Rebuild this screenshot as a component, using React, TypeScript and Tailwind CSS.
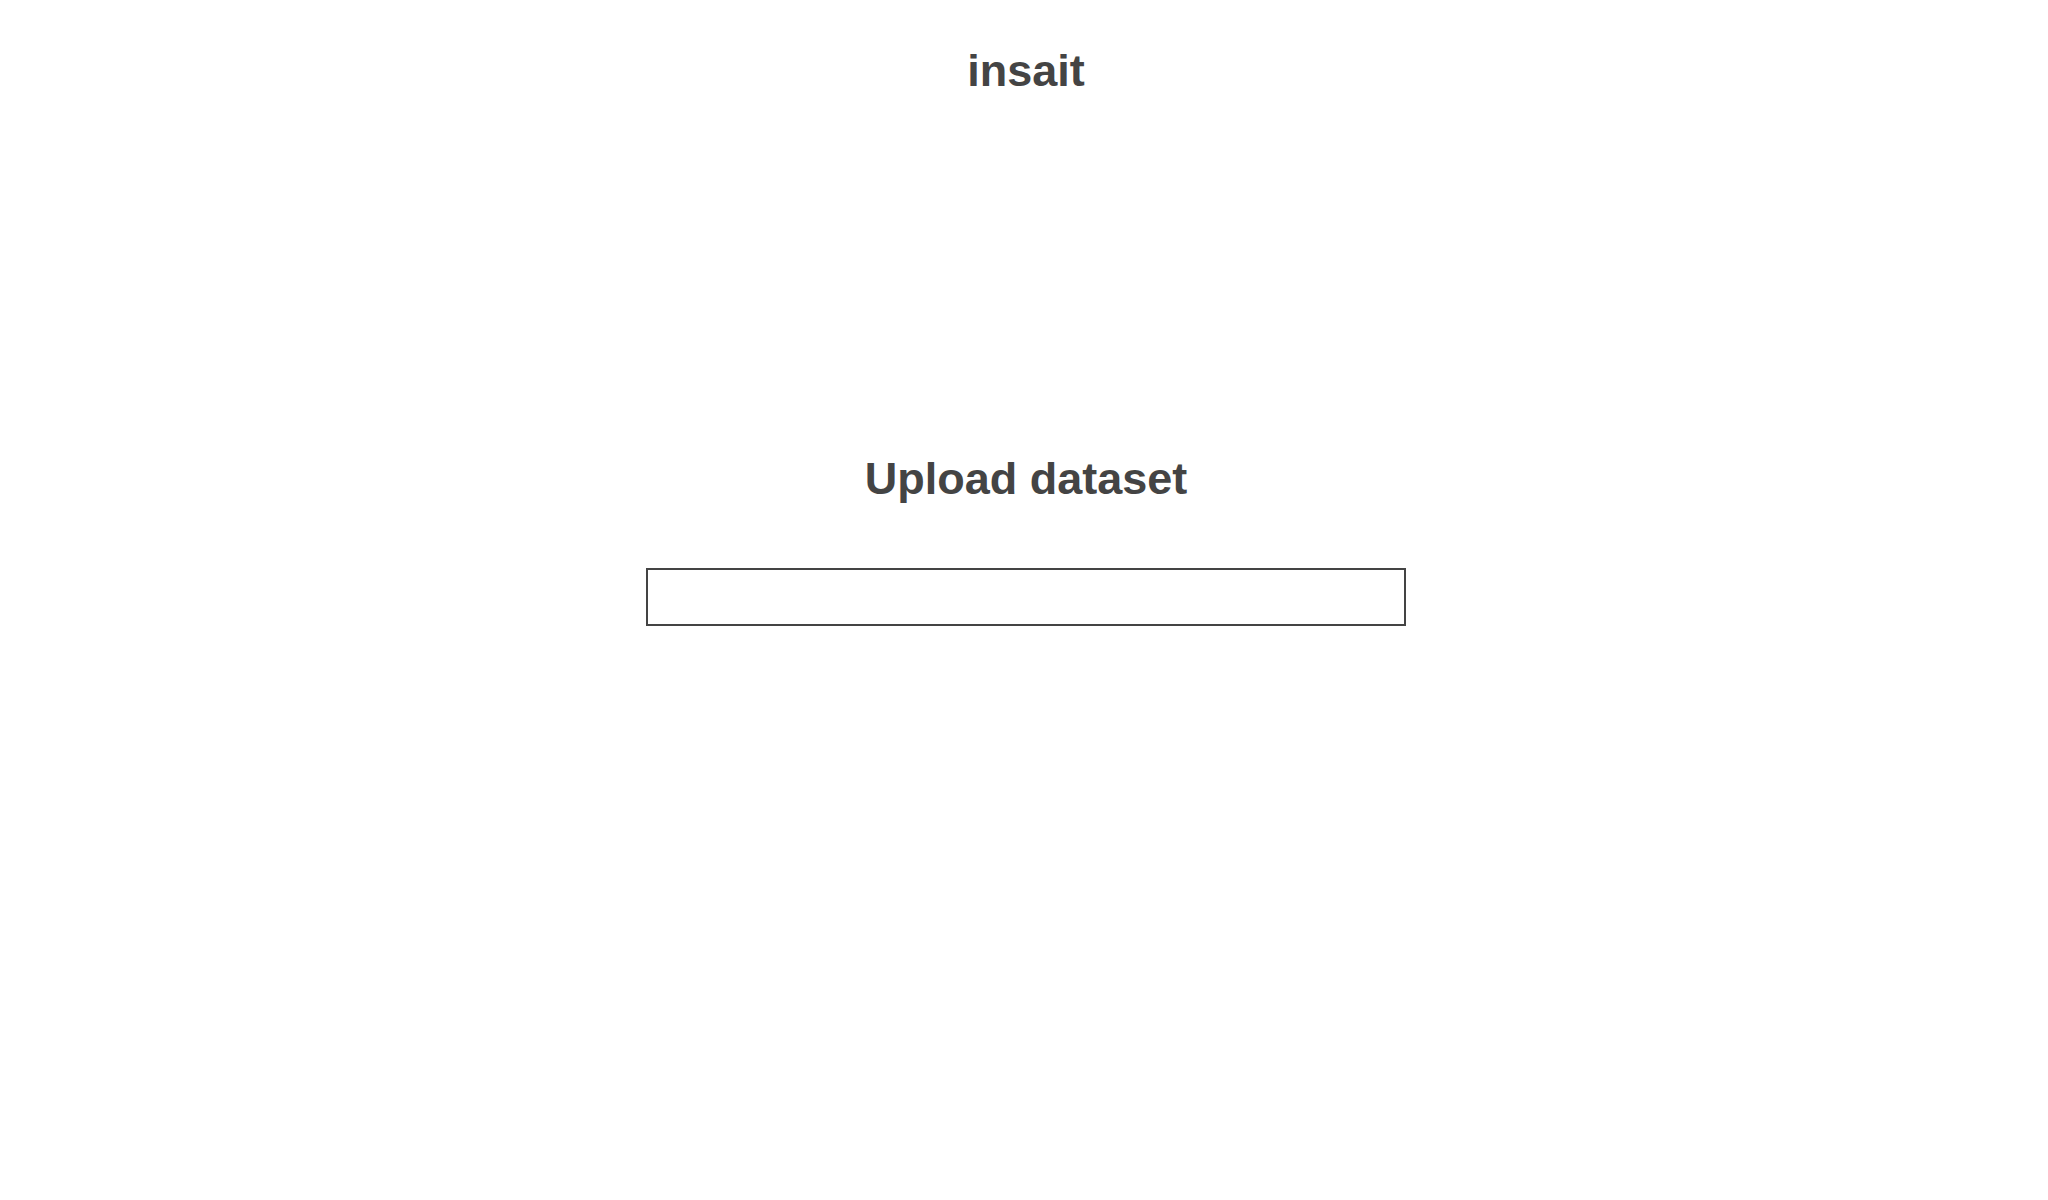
export default function App() {
  return (
    <div
      className="flex min-h-screen flex-col items-center bg-white pl-[4px] text-[#444]"
      style={{ fontFamily: '"Liberation Sans", Arial, sans-serif' }}
    >
      <h1 className="mt-[46px] text-[45px] font-bold leading-[50px]">insait</h1>
      <h2 className="mt-[358px] text-[45px] font-bold leading-[50px]">Upload dataset</h2>
      <div className="mt-[64px] h-[58px] w-[760px] border-2 border-[#444]" />
    </div>
  );
}
